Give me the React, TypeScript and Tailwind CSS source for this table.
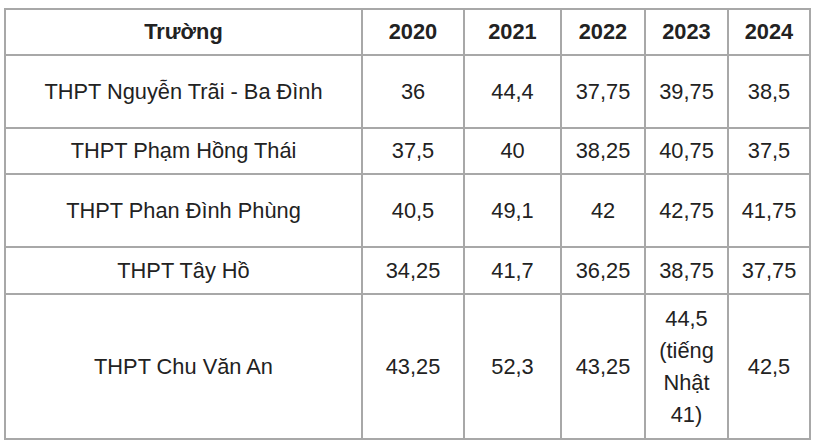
const rows: { name: string; vals: string[]; h: string }[] = [
  { name: "THPT Nguyễn Trãi - Ba Đình", vals: ["36", "44,4", "37,75", "39,75", "38,5"], h: "h-[73px]" },
  { name: "THPT Phạm Hồng Thái", vals: ["37,5", "40", "38,25", "40,75", "37,5"], h: "h-[46px]" },
  { name: "THPT Phan Đình Phùng", vals: ["40,5", "49,1", "42", "42,75", "41,75"], h: "h-[73px]" },
  { name: "THPT Tây Hồ", vals: ["34,25", "41,7", "36,25", "38,75", "37,75"], h: "h-[47px]" },
  { name: "THPT Chu Văn An", vals: ["43,25", "52,3", "43,25", "44,5 (tiếng Nhật 41)", "42,5"], h: "h-[145px]" },
]

const years = ["2020", "2021", "2022", "2023", "2024"]

export default function App() {
  const cell = "border-2 border-[#a8a8a8] px-2 text-center align-middle"
  return (
    <div className="min-h-[443px] w-[820px] bg-white pl-[4px] pt-[8px] font-['Liberation_Sans',Arial,sans-serif] text-[21.8px] leading-[32px] text-[#222]">
      <table className="table-fixed border-collapse">
        <colgroup>
          <col className="w-[357px]" />
          <col className="w-[102px]" />
          <col className="w-[97px]" />
          <col className="w-[84px]" />
          <col className="w-[83px]" />
          <col className="w-[82px]" />
        </colgroup>
        <thead>
          <tr className="h-[46px]">
            <th className={cell + " font-bold"}>Trường</th>
            {years.map((y) => (
              <th key={y} className={cell + " font-bold"}>
                {y}
              </th>
            ))}
          </tr>
        </thead>
        <tbody>
          {rows.map((r) => (
            <tr key={r.name} className={r.h}>
              <td className={cell}>{r.name}</td>
              {r.vals.map((v, i) => (
                <td key={i} className={cell}>
                  {v}
                </td>
              ))}
            </tr>
          ))}
        </tbody>
      </table>
    </div>
  )
}
